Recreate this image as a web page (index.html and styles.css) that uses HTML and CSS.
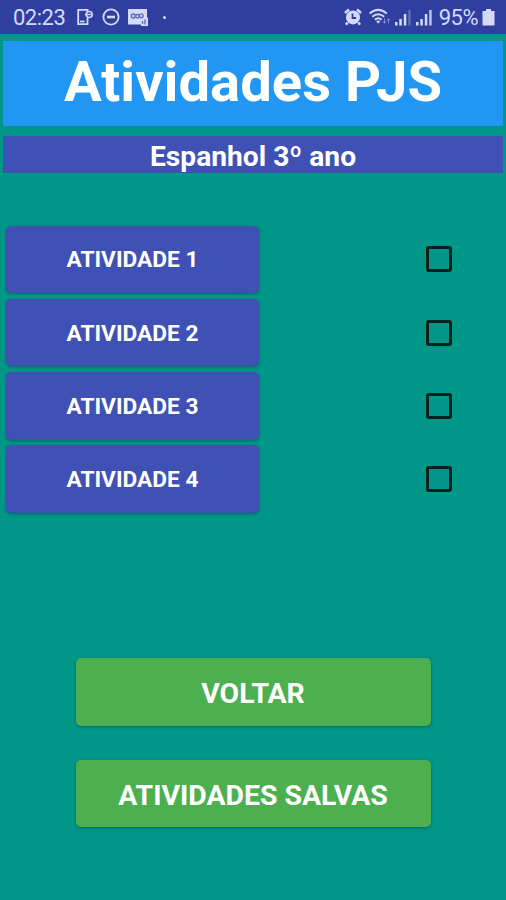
FILE: index.html
```html
<!DOCTYPE html>
<html lang="pt-BR">
<head>
  <meta charset="UTF-8">
  <meta name="viewport" content="width=device-width, initial-scale=1.0">
  <title>Atividades PJS</title>
  <link rel="stylesheet" href="styles.css">
</head>
<body>
  <div class="status-bar">
    <span class="clock">02:23</span>
    <!-- Phone -->
    <svg class="icon-phone" width="17" height="18" viewBox="0 0 17 18" fill="none" stroke="currentColor" stroke-width="1.8">
      <path d="M10.5 4V1.8H1.2V16.2H10.5V10" />
      <path d="M3 13.5H7.5" />
      <circle cx="12.2" cy="6.5" r="3" stroke-width="1.6" />
      <path d="M8 6.5H14" stroke-width="1.4" />
    </svg>
    <!-- Do not disturb -->
    <svg class="icon-dnd" width="18" height="18" viewBox="0 0 18 18" fill="none" stroke="currentColor" stroke-width="1.8">
      <circle cx="9" cy="9" r="7.6" />
      <path d="M5 9H13" stroke-width="2.6" />
    </svg>
    <!-- App notification -->
    <svg class="icon-app" width="21" height="17" viewBox="0 0 21 17">
      <path d="M0 0H19V8.5H20V17H13V15.5H0Z" fill="currentColor" />
      <g fill="none" stroke="#5c68b4" stroke-width="1.3">
        <circle cx="5.3" cy="7" r="2" />
        <circle cx="9.5" cy="7.3" r="1.8" />
        <circle cx="13.3" cy="6.7" r="1.9" />
        <path d="M14.5 12V15M17 10.5V15.5" />
      </g>
    </svg>
    <span class="dot"></span>

    <div class="status-right">
      <!-- Alarm -->
      <svg class="icon-alarm" width="18" height="18" viewBox="0 0 18 18" fill="none" stroke="currentColor">
        <circle cx="9" cy="9.4" r="7" fill="currentColor" stroke="none" />
        <path d="M1 5L5 1.5M17 5L13 1.5M3.5 14.5L2 16.8M14.5 14.5L16 16.8" stroke-width="2.5" />
        <path d="M8.5 5.5V10H12.2" stroke="#303f9f" stroke-width="1.8" />
      </svg>
      <!-- Wifi -->
      <svg class="icon-wifi" width="22" height="18" viewBox="0 0 22 18" fill="none" stroke="currentColor" stroke-width="2">
        <path d="M.7 5.5Q9.2-1.8 17.8 5.5M3.3 8.8Q9.2 3.6 15.2 8.8M5.9 11.8Q9.2 8.8 12.6 11.8" />
        <path d="M7 12.8H11.5L9.2 15.8Z" fill="currentColor" stroke="none" />
        <path d="M15.5 10.5V15M14 13.5L15.5 15.3L17 13.5M19.5 15.5V11M18 12.5L19.5 10.7L21 12.5" stroke-width="1" opacity=".5" />
      </svg>
      <!-- Signal, one per SIM -->
      <svg class="icon-signal" width="17" height="17" viewBox="0 0 17 17" fill="currentColor">
        <path d="M0 13H2.5V16.5H0ZM4.3 10H6.8V16.5H4.3ZM8.8 5H11.3V16.5H8.8Z" />
        <path d="M13.2 1H15.7V16.5H13.2Z" opacity=".3" />
      </svg>
      <svg class="icon-signal" width="17" height="17" viewBox="0 0 17 17" fill="currentColor">
        <path d="M0 13H2.5V16.5H0ZM4.3 10H6.8V16.5H4.3ZM8.8 5H11.3V16.5H8.8Z" />
        <path d="M13.2 1H15.7V16.5H13.2Z" opacity=".85" />
      </svg>
      <span class="battery-text">95%</span>
      <svg class="icon-battery" width="13" height="17" viewBox="0 0 13 17" fill="currentColor">
        <path d="M4 0H9V2H12.5V16.5H.5V2H4Z" />
      </svg>
    </div>
  </div>

  <h1 class="app-title">Atividades PJS</h1>
  <h2 class="subject">Espanhol 3º ano</h2>

  <div class="activities">
    <div class="activity">
      <button class="btn btn-activity">ATIVIDADE 1</button>
      <input class="check" type="checkbox">
    </div>
    <div class="activity">
      <button class="btn btn-activity">ATIVIDADE 2</button>
      <input class="check" type="checkbox">
    </div>
    <div class="activity">
      <button class="btn btn-activity">ATIVIDADE 3</button>
      <input class="check" type="checkbox">
    </div>
    <div class="activity">
      <button class="btn btn-activity">ATIVIDADE 4</button>
      <input class="check" type="checkbox">
    </div>
  </div>

  <div class="actions">
    <button class="btn btn-action">VOLTAR</button>
    <button class="btn btn-action">ATIVIDADES SALVAS</button>
  </div>
</body>
</html>
```
FILE: styles.css
```css
* {
  box-sizing: border-box;
}

body {
  margin: 0;
  height: 900px;
  overflow: hidden;
  font-family: Roboto, "Liberation Sans", sans-serif;
  background: #009688;
  color: #ffffff;
}

.status-bar {
  display: flex;
  align-items: center;
  height: 34px;
  padding: 0 11px 0 13px;
  background: #303f9f;
  color: #d3daf8;
}

.clock,
.battery-text {
  font-size: 22px;
  line-height: 35px;
}

.clock {
  width: 52px;
  letter-spacing: -0.5px;
}

.icon-phone {
  margin-left: 12px;
}

.icon-dnd {
  margin-left: 8px;
}

.icon-app {
  margin-left: 8px;
}

.dot {
  width: 3px;
  height: 3px;
  margin-left: 14px;
  border-radius: 50%;
  background: currentColor;
}

.status-right {
  display: flex;
  align-items: center;
  margin-left: auto;
}

.icon-alarm {
  margin-right: 1px;
}

.icon-wifi {
  margin-left: 6px;
}

.icon-signal {
  margin-left: 4px;
}

.battery-text {
  margin-left: 6px;
  letter-spacing: -0.5px;
}

.icon-battery {
  margin-left: 4px;
}

.app-title {
  height: 84.5px;
  margin: 7px 3px 0;
  background: #2196f3;
  font-size: 56.2px;
  font-weight: 700;
  line-height: 82px;
  text-align: center;
}

.subject {
  height: 37.5px;
  margin: 10px 3px 0;
  background: #3f51b5;
  font-size: 28.2px;
  font-weight: 700;
  line-height: 41px;
  text-align: center;
}

.activities {
  display: flex;
  flex-direction: column;
  gap: 5.8px;
  margin-top: 52.5px;
  padding: 0 54px 0 6px;
}

.activity {
  display: flex;
  align-items: center;
  justify-content: space-between;
}

.btn {
  height: 67.5px;
  padding: 1px 0 0;
  border: none;
  border-radius: 5px;
  color: #ffffff;
  font-family: inherit;
  font-weight: 700;
  cursor: pointer;
  box-shadow: 0 1px 3px rgba(0, 0, 0, 0.3);
}

.btn-activity {
  width: 253px;
  background: #3f51b5;
  font-size: 22.7px;
}

.check {
  appearance: none;
  width: 26px;
  height: 26px;
  margin: 0;
  border: 3px solid #04201d;
  border-radius: 3px;
}

.actions {
  display: flex;
  flex-direction: column;
  align-items: center;
  gap: 34px;
  margin-top: 145.5px;
}

.btn-action {
  width: 355px;
  padding-top: 3px;
  background: #4caf50;
  font-size: 28.4px;
}
```
